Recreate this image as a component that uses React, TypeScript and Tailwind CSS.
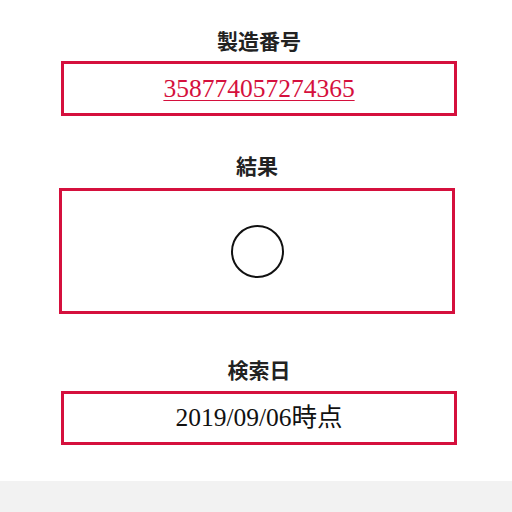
import React from 'react';

const serif = "font-['Liberation_Serif','Noto_Sans_CJK_JP',serif]";

const Label: React.FC<{ text: string; className?: string }> = ({ text, className }) => (
  <div className={`w-[396px] text-center text-[21px] leading-[28px] font-bold text-[#222] ${className ?? ''}`}>
    {text}
  </div>
);

export default function App() {
  return (
    <div className={`w-[512px] h-[512px] bg-white flex flex-col overflow-hidden ${serif}`}>
      <div className="flex flex-col pl-[61px]">
        {/* 製造番号 */}
        <Label text="製造番号" className="mt-[28px] mb-[5px]" />
        <div className="w-[396px] h-[55px] border-[3px] border-[#d5103d] flex items-center justify-center">
          <a href="#" className="text-[25.5px] leading-none text-[#d5103d] underline underline-offset-[3px] decoration-1">
            358774057274365
          </a>
        </div>

        {/* 結果 */}
        <Label text="結果" className="mt-[37px] mb-[7px] -ml-[2px]" />
        <div className="w-[396px] h-[126px] -ml-[2px] border-[3px] border-[#d5103d] flex items-center justify-center">
          <div className="w-[53px] h-[53px] rounded-full border-2 border-[#111]" />
        </div>

        {/* 検索日 */}
        <Label text="検索日" className="mt-[43px] mb-[6px]" />
        <div className="w-[396px] h-[54px] border-[3px] border-[#d5103d] flex items-center justify-center">
          <span className="text-[25.5px] leading-none text-[#111]">2019/09/06時点</span>
        </div>
      </div>

      <div className="mt-[36px] flex-1 bg-[#f2f2f2]" />
    </div>
  );
}
